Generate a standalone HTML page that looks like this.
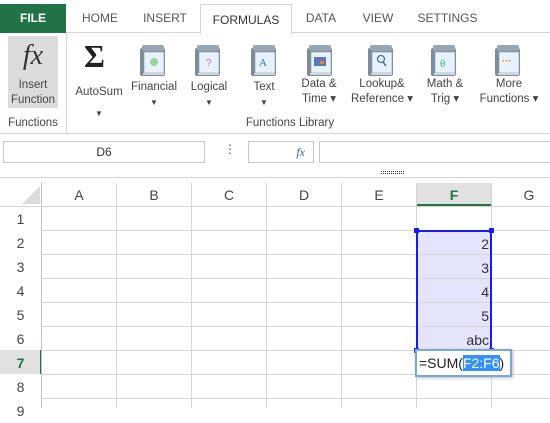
<!DOCTYPE html>
<html><head><style>
*{margin:0;padding:0;box-sizing:border-box}
body{width:550px;height:408px;overflow:hidden;background:#fff;font-family:"Segoe UI","Liberation Sans",sans-serif;color:#333;position:relative;font-size:12px}
.a{position:absolute}
.tab{position:absolute;top:0;height:33px;line-height:36px;font-size:12px;color:#555;text-align:center}
.lbl{position:absolute;font-size:11.5px;color:#444;text-align:center;line-height:15px;white-space:nowrap}
.col{position:absolute;top:183px;height:23px;line-height:25px;text-align:center;font-size:14px;color:#444}
.row{position:absolute;left:0;width:41px;height:24px;line-height:24px;text-align:center;font-size:14px;color:#444}
.hl{position:absolute;left:42px;width:508px;height:1px;background:#d4d4d4}
.vl{position:absolute;top:183px;height:225px;width:1px;background:#d4d4d4}
.num{position:absolute;left:416px;width:73px;text-align:right;font-size:14px;color:#333;height:24px;line-height:26px}
</style></head><body>
<div class="a" style="left:0;top:32px;width:550px;height:1px;background:#d4d4d4"></div>
<div class="a" style="left:0;top:4px;width:66px;height:29px;background:#217346;color:#fff;font-weight:bold;font-size:12px;text-align:center;line-height:29px">FILE</div>
<div class="tab" style="left:70px;width:60px">HOME</div>
<div class="tab" style="left:135px;width:60px">INSERT</div>
<div class="a" style="left:200px;top:4px;width:92px;height:30px;border:1px solid #d4d4d4;border-bottom:none;background:#fff;text-align:center;line-height:30px;font-size:12px;color:#333">FORMULAS</div>
<div class="tab" style="left:296px;width:50px">DATA</div>
<div class="tab" style="left:353px;width:50px">VIEW</div>
<div class="tab" style="left:410px;width:75px">SETTINGS</div>
<div class="a" style="left:0;top:133px;width:550px;height:1px;background:#d4d4d4"></div>
<div class="a" style="left:66px;top:33px;width:1px;height:100px;background:#d4d4d4"></div>
<div class="a" style="left:8px;top:36px;width:50px;height:72px;background:#dcdcdc"></div>
<div class="a" style="left:8px;top:40px;width:50px;text-align:center;font-family:'Liberation Serif',serif;font-style:italic;font-size:28px;color:#333">fx</div>
<div class="lbl" style="left:8px;top:78px;width:50px">Insert<br>Function</div>
<div class="lbl" style="left:0;top:116px;width:66px">Functions</div>
<div class="a" style="left:84px;top:38px;font-family:'Liberation Serif',serif;font-weight:bold;font-size:32px;color:#222">Σ</div>
<div class="lbl" style="left:72px;top:85px;width:54px">AutoSum</div>
<div class="lbl" style="left:72px;top:106px;width:54px;font-size:8px">▼</div>
<div class="lbl" style="left:230px;top:116px;width:120px">Functions Library</div>
<svg class="a" style="left:0;top:0" width="550" height="80">
<defs><g id="bk">
<rect x="0" y="3" width="25" height="28" rx="2" fill="#7d8c9b"/>
<rect x="2" y="0" width="22" height="6" rx="2" fill="#98a5b2"/>
<rect x="4" y="7" width="20" height="21" fill="#e8f2fc" stroke="#8898a8" stroke-width="0.6"/>
<rect x="3" y="28" width="21" height="2" fill="#d0d5da"/>
</g></defs>
<use href="#bk" x="140" y="45"/><ellipse cx="154" cy="62" rx="4" ry="4" fill="#9ed39e"/>
<use href="#bk" x="195" y="45"/><text x="206" y="66" font-size="10" fill="#c070c0" font-family="Liberation Sans">?</text>
<use href="#bk" x="251" y="45"/><text x="259" y="66" font-size="11" fill="#3070c0" font-family="Liberation Serif">A</text>
<use href="#bk" x="307" y="45"/><rect x="314" y="57" width="12" height="9" fill="#5a78c0"/><rect x="320" y="61" width="4" height="3" fill="#f08020"/>
<use href="#bk" x="368" y="45"/><circle cx="381" cy="59" r="3.5" fill="none" stroke="#4070b0" stroke-width="1.3"/><line x1="383" y1="62" x2="386" y2="66" stroke="#4070b0" stroke-width="1.5"/>
<use href="#bk" x="431" y="45"/><text x="440" y="67" font-size="11" fill="#40b060" font-family="Liberation Serif">θ</text>
<use href="#bk" x="495" y="45"/><text x="502" y="64" font-size="10" fill="#f08020" font-family="Liberation Sans" font-weight="bold">···</text>
</svg>
<div class="lbl" style="left:128px;top:80px;width:52px">Financial<br><span style="font-size:8px">▼</span></div>
<div class="lbl" style="left:184px;top:80px;width:50px">Logical<br><span style="font-size:8px">▼</span></div>
<div class="lbl" style="left:240px;top:80px;width:48px">Text<br><span style="font-size:8px">▼</span></div>
<div class="lbl" style="left:292px;top:77px;width:54px">Data &amp;<br>Time ▾</div>
<div class="lbl" style="left:348px;top:77px;width:68px">Lookup&amp;<br>Reference ▾</div>
<div class="lbl" style="left:420px;top:77px;width:50px">Math &amp;<br>Trig ▾</div>
<div class="lbl" style="left:474px;top:77px;width:70px">More<br>Functions ▾</div>
<div class="a" style="left:3px;top:141px;width:202px;height:22px;border:1px solid #c8c8c8;text-align:center;line-height:21px;font-size:12px">D6</div>
<div class="a" style="left:224px;top:142px;font-size:12px;color:#555">⋮</div>
<div class="a" style="left:248px;top:141px;width:66px;height:22px;border:1px solid #c8c8c8;text-align:right;padding-right:8px;line-height:20px;font-family:'Liberation Serif',serif;font-style:italic;font-size:12px;color:#3060a0">fx</div>
<div class="a" style="left:319px;top:141px;width:240px;height:22px;border:1px solid #c8c8c8"></div>
<div class="a" style="left:0;top:177px;width:550px;height:1px;background:#d4d4d4"></div>
<div class="a" style="left:381px;top:171px;width:23px;height:3px;border-top:1px dotted #333;border-bottom:1px dotted #333"></div>
<div class="a" style="left:416px;top:183px;width:75px;height:23px;background:#e1e1e1;border-bottom:2px solid #217346"></div>
<div class="a" style="left:0;top:350px;width:41px;height:24px;background:#e1e1e1"></div>
<div class="a" style="left:40px;top:350px;width:2px;height:24px;background:#217346"></div>
<svg class="a" style="left:22px;top:186px" width="18" height="18"><polygon points="18,0 18,18 0,18" fill="#dcdcdc"/></svg>
<div class="a" style="left:416px;top:230px;width:75px;height:120px;background:#e4e4fb"></div>
<div class="vl" style="left:41px;background:#c0c0c0"></div>
<div class="vl" style="left:116px"></div><div class="vl" style="left:191px"></div><div class="vl" style="left:266px"></div><div class="vl" style="left:341px"></div><div class="vl" style="left:416px"></div><div class="vl" style="left:491px"></div>
<div class="a" style="left:0;top:206px;width:550px;height:1px;background:#d4d4d4"></div>
<div class="hl" style="top:230px"></div><div class="hl" style="top:254px"></div><div class="hl" style="top:278px"></div><div class="hl" style="top:302px"></div><div class="hl" style="top:326px"></div><div class="hl" style="top:350px"></div><div class="hl" style="top:374px"></div><div class="hl" style="top:398px"></div>
<div class="col" style="left:42px;width:74px">A</div>
<div class="col" style="left:117px;width:74px">B</div>
<div class="col" style="left:192px;width:74px">C</div>
<div class="col" style="left:267px;width:74px">D</div>
<div class="col" style="left:342px;width:74px">E</div>
<div class="col" style="left:417px;width:74px;color:#217346;font-weight:bold">F</div>
<div class="col" style="left:492px;width:74px">G</div>
<div class="row" style="top:207px">1</div><div class="row" style="top:231px">2</div><div class="row" style="top:255px">3</div><div class="row" style="top:279px">4</div><div class="row" style="top:303px">5</div><div class="row" style="top:327px">6</div><div class="row" style="top:351px;color:#217346;font-weight:bold">7</div><div class="row" style="top:375px">8</div><div class="row" style="top:399px">9</div>
<div class="num" style="top:231px">2</div><div class="num" style="top:255px">3</div><div class="num" style="top:279px">4</div><div class="num" style="top:303px">5</div><div class="num" style="top:327px">abc</div>
<div class="a" style="left:416px;top:230px;width:76px;height:121px;border:2px solid #1a1aee"></div>
<div class="a" style="left:414px;top:228px;width:5px;height:5px;background:#1a1aee"></div>
<div class="a" style="left:489px;top:228px;width:5px;height:5px;background:#1a1aee"></div>
<div class="a" style="left:414px;top:348px;width:5px;height:5px;background:#1a1aee"></div>
<div class="a" style="left:489px;top:348px;width:5px;height:5px;background:#1a1aee"></div>
<div class="a" style="left:415px;top:349px;width:97px;height:28px;border:2px solid #7aa6e0;background:#fff;box-shadow:1px 1px 3px #bbb;font-size:14px;line-height:24px;padding-left:2px;color:#222;white-space:nowrap">=SUM(<span style="background:#3390ff;color:#fff">F2:F6</span>)</div>
</body></html>
